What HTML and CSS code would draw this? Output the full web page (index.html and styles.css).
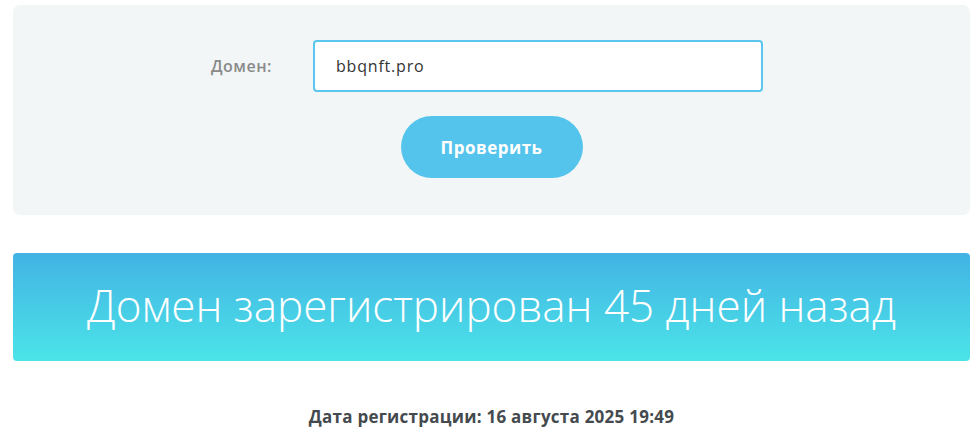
FILE: index.html
```html
<!DOCTYPE html>
<html lang="ru">
<head>
    <meta charset="UTF-8">
    <meta name="viewport" content="width=device-width, initial-scale=1.0">
    <title>Проверка возраста домена</title>
    <link rel="stylesheet" href="styles.css">
</head>
<body>
    <div class="page">
        <form class="check-form" onsubmit="return false">
            <div class="form-row">
                <label for="domain" class="form-label">Домен:</label>
                <input type="text" id="domain" class="form-input" value="bbqnft.pro">
            </div>
            <button type="submit" class="check-button">Проверить</button>
        </form>

        <div class="result-banner">
            Домен зарегистрирован 45 дней назад
        </div>

        <p class="reg-date">Дата регистрации: 16 августа 2025 19:49</p>
    </div>
</body>
</html>
```

FILE: styles.css
```css
body {
    margin: 0;
    font-family: 'Open Sans', 'Noto Sans', sans-serif;
    background-color: #ffffff;
    color: #444;
}

.page {
    padding: 5px 4px 0 13px;
}

.check-form {
    background-color: #f2f6f7;
    border-radius: 7px;
    padding: 35px 0 37px;
    display: flex;
    flex-direction: column;
    align-items: center;
    gap: 24px;
}

.form-row {
    display: flex;
    align-items: center;
    gap: 40px;
    margin-left: -9px;
}

.form-label {
    width: 62px;
    font-size: 16px;
    font-weight: 600;
    letter-spacing: 0.5px;
    color: #8a8a8a;
}

.form-input {
    box-sizing: border-box;
    width: 450px;
    height: 52px;
    padding: 0 21px;
    border: 2px solid #5cc7ee;
    border-radius: 4px;
    background: #ffffff;
    font-family: inherit;
    font-size: 16px;
    font-weight: 500;
    letter-spacing: 0.8px;
    color: #333;
    outline: none;
}

.check-button {
    width: 182px;
    height: 62px;
    border: none;
    border-radius: 31px;
    background-color: #55c4ec;
    color: #ffffff;
    font-family: inherit;
    font-size: 17px;
    font-weight: 700;
    letter-spacing: 0.5px;
    cursor: pointer;
}

.result-banner {
    margin-top: 38px;
    height: 108px;
    border-radius: 4px;
    background: linear-gradient(to bottom, #42b3e4, #4be4e8);
    color: #ffffff;
    font-size: 44px;
    font-weight: 300;
    padding-bottom: 4px;
    box-sizing: border-box;
    display: flex;
    align-items: center;
    justify-content: center;
}

.reg-date {
    margin: 44px 0 0;
    text-align: center;
    font-size: 17px;
    font-weight: 700;
    letter-spacing: 0.25px;
    color: #454a4f;
}
```
